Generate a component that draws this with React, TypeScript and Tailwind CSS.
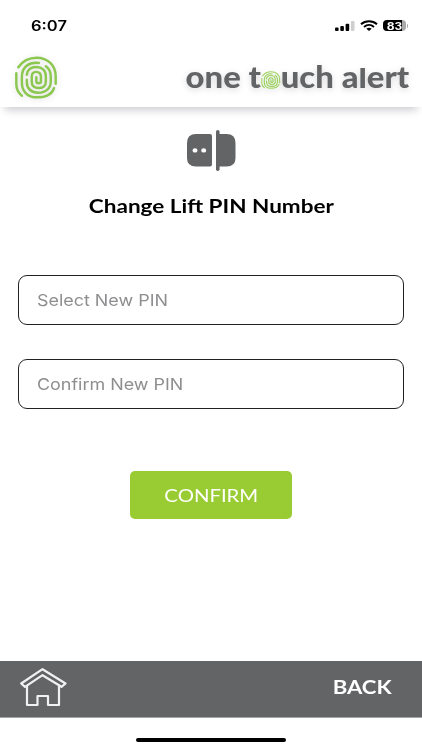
/** @file Lift PIN change screen */

/** Concentric ridges used in the brand mark and wordmark */
const Fingerprint = ({ className }: { className: string }) => (
  <svg
    viewBox="44 165 128 130"
    preserveAspectRatio="none"
    fill="none"
    stroke="currentColor"
    strokeWidth="7.5"
    strokeLinecap="round"
    className={className}
  >
    <path d="M54 199C67 180 86 170 110 170C144 170 168 194 168 226V249" />
    <path d="M48 217V250C48 265 54 277 65 285" />
    <path d="M117 186C86 182 65 199 65 228V246C65 272 82 290 111 290C138 290 157 280 163 262" />
    <path d="M138 196C149 203 153 213 153 228V242C153 262 138 276 115 276C93 276 80 263 80 244V237" />
    <path d="M80 222C81 207 93 198 108 198C126 198 138 209 138 227V243C138 255 129 262 116 262C102 262 95 255 95 243V228C95 218 100 213 108 213C118 213 123 218 123 228V242C123 249 109 249 109 242V229" />
  </svg>
);

/** Clock, signal, wifi and battery */
const StatusBar = () => (
  <div className="flex h-[50px] items-center justify-between pl-[31px] pr-[13px] pt-px font-['Inter',sans-serif]">
    <span className="origin-left scale-x-[1.18] text-[14px] font-semibold leading-none">
      6:07
    </span>
    <div className="flex items-center">
      <svg viewBox="0 0 20 10" className="h-[10px] w-5">
        <rect x="0" y="6.5" width="3.6" height="3.5" rx="1" />
        <rect x="5.3" y="5" width="3.6" height="5" rx="1" />
        <rect x="10.6" y="2.8" width="3.6" height="7.2" rx="1" />
        <rect x="15.9" y="0" width="3.6" height="10" rx="1" fill="#cfcfcf" />
      </svg>
      <svg
        viewBox="0 0 18 11"
        fill="none"
        stroke="#000"
        strokeWidth="2"
        className="ml-[5px] h-[11px] w-[18px]"
      >
        <path d="M1 4.2C5.5 .1 12.5 .1 17 4.2" />
        <path d="M4 6.9C7 4.3 11 4.3 14 6.9" />
        <path d="M6.3 8.7Q9 6.8 11.7 8.7L9 11Z" fill="#000" stroke="none" />
      </svg>
      <div className="ml-[5px] flex h-[11px] w-[23px] items-center justify-center rounded-[4px] bg-[linear-gradient(to_right,#000_83%,#aaa_83%)] text-white">
        <span className="scale-x-[1.2] text-[10px] font-bold leading-none">83</span>
      </div>
      <div className="ml-px mr-px h-1 w-[1.5px] rounded-r bg-[#aaa]" />
    </div>
  </div>
);

/** Brand mark and wordmark */
const Header = () => (
  <header className="flex h-[57px] items-start justify-between pl-[15px] pr-[12.5px] shadow-[0_8px_8px_-5px_rgba(50,50,70,0.25)]">
    <Fingerprint className="mt-[5.5px] h-[43px] w-[42px] text-[#8cc850] drop-shadow-[0_1px_3px_rgba(0,0,0,0.12)]" />
    <div className="mt-[8px] flex origin-right scale-x-[1.095] whitespace-pre text-[30px] font-black leading-9 text-[#636466] drop-shadow-[0_2px_3px_rgba(0,0,0,0.15)]">
      <span>one t</span>
      <Fingerprint className="ml-[0.5px] mt-[13px] h-[18px] w-[17.5px] text-[#9bd35a]" />
      <span>
        uch a
        <span className="inline-block origin-[50%_80%] scale-y-[0.87]">l</span>
        ert
      </span>
    </div>
  </header>
);

/** Two halves of the lift key fob */
const LiftIcon = () => (
  <svg viewBox="0 0 49 41" fill="#636466" className="mt-[23px] h-[41px] w-[49px]">
    <path
      fillRule="evenodd"
      d="M9 4H23Q25 4 25 6V34.500Q25 36.500 23 36.500H9Q0 36.500 0 28V13Q0 4 9 4ZM8 18.200A2.500 2.200 0 1 0 8 22.600A2.500 2.200 0 1 0 8 18.200ZM16.700 18.200A2.500 2.200 0 1 0 16.700 22.600A2.500 2.200 0 1 0 16.700 18.200Z"
    />
    <rect x="29" y="0" width="3.6" height="41" rx="1.800" />
    <path d="M32 4H39.500Q48.500 4 48.500 13V28Q48.500 36.500 39.500 36.500H32Z" />
  </svg>
);

const PinField = ({ label }: { label: string }) => (
  <label className="flex h-[50px] items-center rounded-[9px] border border-[#222] pl-[18px]">
    <input
      placeholder={label}
      className="w-[300px] origin-left scale-x-[1.12] font-['Inter',sans-serif] text-[16px] placeholder:text-[#8e8e90]"
    />
  </label>
);

/** Home and back navigation */
const Footer = () => (
  <footer className="flex h-[57px] items-start justify-between border-b border-[#a5a6a7] bg-[#636466] pl-5 pr-[30px] text-white">
    <svg
      viewBox="0 0 47 39"
      fill="none"
      stroke="#f1f1f1"
      strokeWidth="2.200"
      strokeLinejoin="round"
      className="mt-[7px] h-[39px] w-[47px]"
    >
      <path d="M22.500 1.200L1.200 15.500L5 18.800L22.500 7.200L41.500 18.800L45.500 15.500Z" />
      <path d="M7 17.500V37H17.500V28H28V37H39V17.500" />
    </svg>
    <button className="mt-[14px] origin-right scale-x-[1.165] text-[19px] font-bold leading-6">
      BACK
    </button>
  </footer>
);

const App = () => (
  <div className="flex h-[750px] w-[422px] flex-col overflow-hidden bg-white font-['Lato',sans-serif] text-black">
    <StatusBar />
    <Header />
    <main className="flex grow flex-col items-center">
      <LiftIcon />
      <h1 className="mt-[23px] scale-x-[1.185] whitespace-nowrap text-[19px] font-bold leading-6">
        Change Lift PIN Number
      </h1>
      <div className="mt-[57px] flex w-[386px] flex-col gap-[34px]">
        <PinField label="Select New PIN" />
        <PinField label="Confirm New PIN" />
      </div>
      <button className="mt-[62px] h-[48px] w-[162px] rounded-[5px] bg-[#99cc33] pt-px text-[17px] text-white">
        <span className="inline-block scale-x-[1.195]">CONFIRM</span>
      </button>
    </main>
    <Footer />
    <div className="flex h-8 shrink-0 items-start justify-center pt-5">
      <div className="h-1 w-[150px] rounded-full bg-black" />
    </div>
  </div>
);

export default App;
